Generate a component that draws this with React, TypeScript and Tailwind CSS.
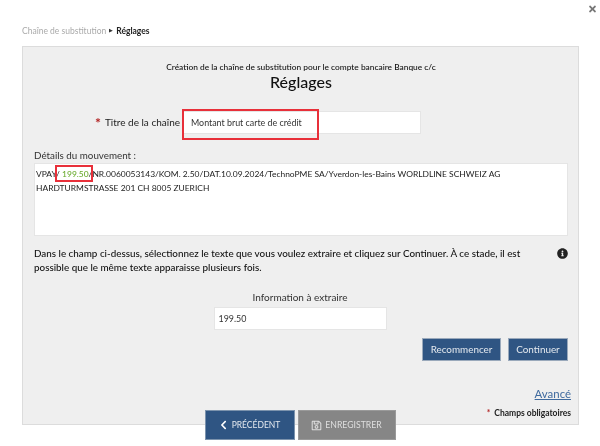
import { FaChevronLeft, FaInfoCircle, FaRegSave, FaTimes } from "react-icons/fa";

export default function App() {
  return (
    <div className="relative flex h-[446px] w-[600px] flex-col overflow-hidden bg-white font-['Lato',sans-serif] text-[#222] blur-[0.35px]">
      <div className="flex justify-end pr-[3px] pt-[4px]">
        <FaTimes className="h-[10px] w-[9px] text-[#777]" />
      </div>
      <div className="mt-[11px] flex h-[12px] items-center pl-[22px] text-[8.5px]">
        <span className="text-[#aaa]">Chaîne de substitution</span>
        <span className="mx-[3px] text-[5px] text-[#333]">▶</span>
        <span className="font-bold text-[#222]">Réglages</span>
      </div>

      <section className="mx-[22px] mt-[9px] flex h-[379px] w-[557px] flex-col border border-[#dcdcdc] bg-[#efefef] pl-[11px] pr-[10px] pt-[13px]">
        <p className="text-center text-[8.4px] font-medium leading-[14px] text-[#111]">
          Création de la chaîne de substitution pour le compte bancaire Banque c/c
        </p>
        <h1 className="mt-[-2px] text-center text-[16px] font-medium leading-[20px] text-[#111]">Réglages</h1>

        <div className="mt-[19px] flex h-[23px] items-center">
          <label className="flex w-[149px] items-center justify-end gap-[4px] pr-[3px] text-[10px] text-[#222]">
            <span className="text-[14px] font-bold leading-[14px] text-[#b22222]">*</span>
            Titre de la chaîne
          </label>
          <div className="relative h-[23px] w-[238px] border border-[#e5e5e5] bg-white pl-[7px] text-[8.9px] leading-[21px] text-[#333]">
            Montant brut carte de crédit
            <span className="absolute left-[-2px] top-[-3px] h-[31px] w-[137px] border-2 border-[#e8303a]" />
          </div>
        </div>

        <label className="mt-[14px] text-[9.8px] leading-[14px] text-[#333]">Détails du mouvement :</label>
        <div className="relative mt-[1px] h-[73px] border border-[#e5e5e5] bg-white pl-[1px] pr-[2px] pt-[3px] text-[8.45px] leading-[14px] text-[#222]">
          VPAY/ <span className="font-medium text-[#6aab2e]">199.50</span>/NR.0060053143/KOM. 2.50/DAT.10.09.2024/TechnoPME SA/Yverdon-les-Bains WORLDLINE SCHWEIZ AG
          <br />
          HARDTURMSTRASSE 201 CH 8005 ZUERICH
          <span className="absolute left-[20px] top-[1px] h-[17px] w-[38px] border-2 border-[#e8303a]" />
        </div>

        <div className="mt-[10px] flex items-start justify-between">
          <p className="w-[500px] text-[9.85px] font-medium leading-[14px] text-[#111]">
            Dans le champ ci-dessus, sélectionnez le texte que vous voulez extraire et cliquez sur Continuer. À ce stade, il est possible que le même texte apparaisse plusieurs fois.
          </p>
          <FaInfoCircle className="mt-[2px] h-[11px] w-[11px] text-[#222]" />
        </div>

        <div className="mt-[16px] flex flex-col items-center pr-[2px]">
          <label className="text-[10px] leading-[14px] text-[#333]">Information à extraire</label>
          <div className="mt-[3px] h-[23px] w-[173px] border border-[#e5e5e5] bg-white pl-[4px] text-[8.9px] leading-[21px] text-[#333]">
            199.50
          </div>
        </div>

        <div className="mt-[8px] flex justify-end gap-[7px]">
          <button className="h-[23px] w-[79px] border border-[#9aa9bb] bg-[#2f5583] text-[9.9px] text-[#e4e9ef]">Recommencer</button>
          <button className="h-[23px] w-[60px] border border-[#9aa9bb] bg-[#2f5583] text-[9.9px] text-[#e4e9ef]">Continuer</button>
        </div>

        <div className="mt-[25px] flex justify-end">
          <a className="mr-[-3px] text-[11.4px] leading-[16px] text-[#3f6a9f] underline">Avancé</a>
        </div>
        <p className="mr-[-3px] mt-[5px] text-right text-[8.5px] font-bold leading-[12px] text-[#222]">
          <span className="mr-[4px] text-[#b22222]">*</span>Champs obligatoires
        </p>
      </section>

      <div className="mt-[-15px] flex justify-center gap-[3px]">
        <button className="flex h-[30px] w-[90px] items-center justify-center gap-[4px] border border-[#7c93ad] bg-[#2f5583] text-[8.5px] text-[#e4e9ef]">
          <FaChevronLeft className="h-[10px] w-[9px] text-white" />
          PRÉCÉDENT
        </button>
        <button className="flex h-[30px] w-[98px] items-center justify-center gap-[3px] border border-[#9a9a9a] bg-[#868686] text-[8.7px] text-[#dedede]">
          <FaRegSave className="h-[11px] w-[11px]" />
          ENREGISTRER
        </button>
      </div>
    </div>
  );
}
